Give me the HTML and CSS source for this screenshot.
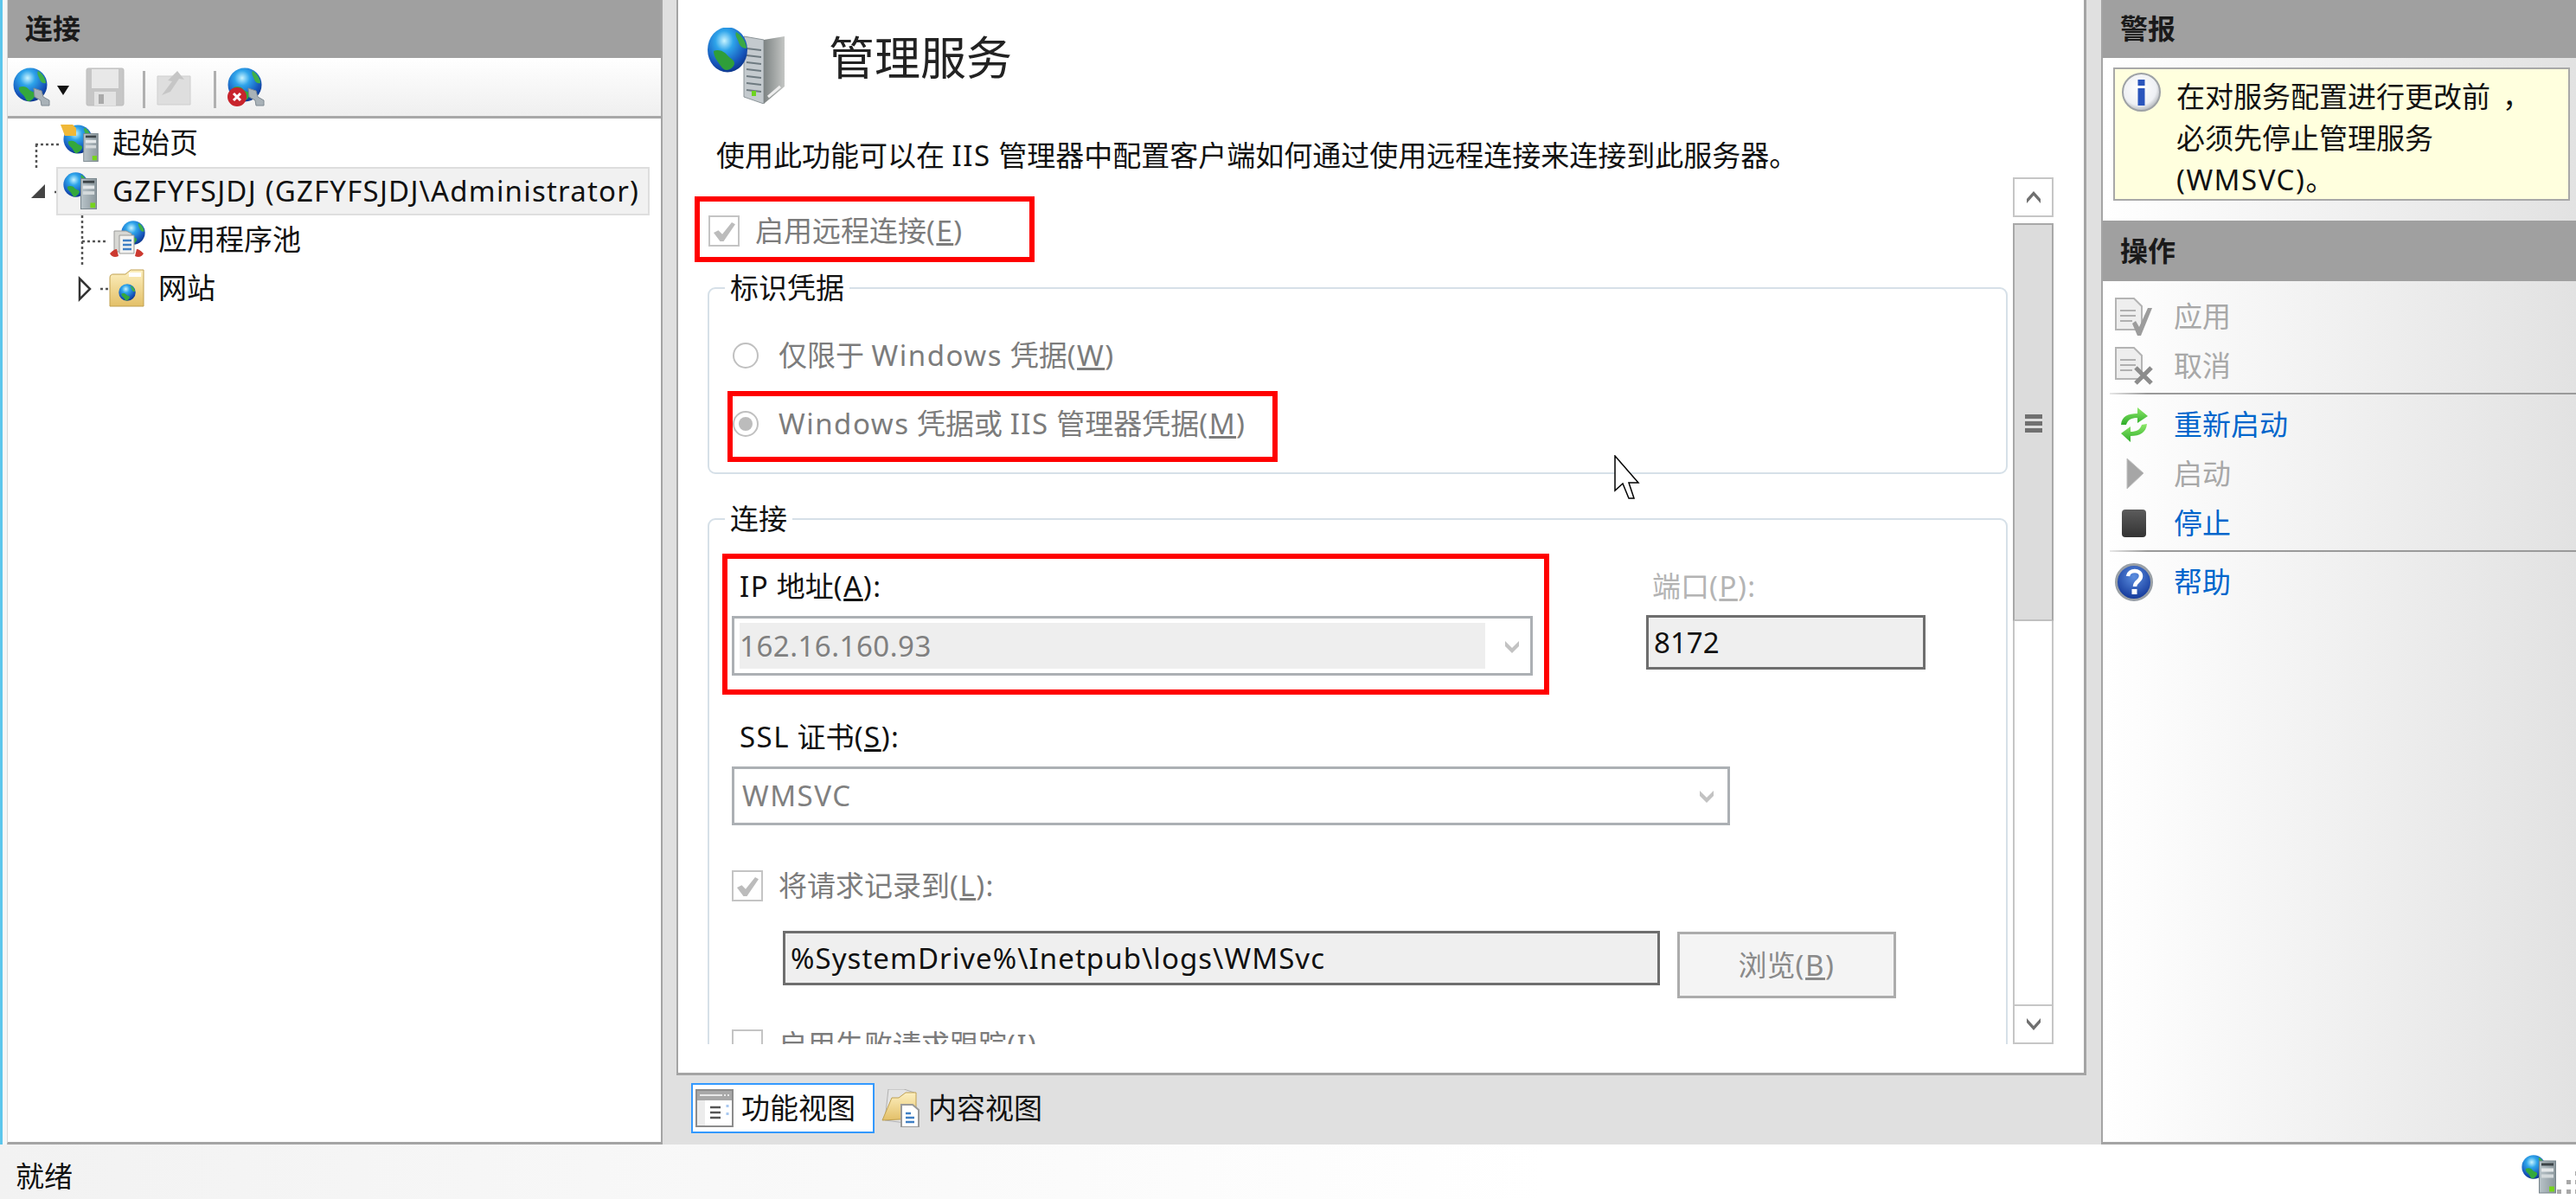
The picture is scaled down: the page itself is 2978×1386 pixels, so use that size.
FILE: index.html
```html
<!DOCTYPE html>
<html lang="zh-CN">
<head>
  <meta charset="UTF-8" />
  <title>管理服务</title>
  <link rel="stylesheet" href="styles.css">
</head>
<body>

  <!-- shared icon parts -->
  <svg class="icon-defs" xmlns="http://www.w3.org/2000/svg">
    <defs>
      <radialGradient id="gGlobe" cx="0.42" cy="0.3" r="0.75">
        <stop offset="0" stop-color="#c8f4ff"/>
        <stop offset="0.3" stop-color="#2ea4ea"/>
        <stop offset="0.75" stop-color="#1552b8"/>
        <stop offset="1" stop-color="#0b2f80"/>
      </radialGradient>
      <linearGradient id="gServer" x1="0" x2="1" y1="0" y2="0">
        <stop offset="0" stop-color="#b9c4c9"/>
        <stop offset="1" stop-color="#8b979d"/>
      </linearGradient>
      <linearGradient id="gSide" x1="0" x2="1" y1="0" y2="0">
        <stop offset="0" stop-color="#7e8484"/>
        <stop offset="1" stop-color="#c4c6c4"/>
      </linearGradient>
      <linearGradient id="gFolder" x1="0" x2="0" y1="0" y2="1">
        <stop offset="0" stop-color="#fdf0c0"/>
        <stop offset="1" stop-color="#e3c068"/>
      </linearGradient>
      <linearGradient id="gArrow" x1="0" x2="0" y1="0" y2="1">
        <stop offset="0" stop-color="#8ee86a"/>
        <stop offset="1" stop-color="#2fae2a"/>
      </linearGradient>
      <linearGradient id="gStop" x1="0" x2="0" y1="0" y2="1">
        <stop offset="0" stop-color="#5c5c5c"/>
        <stop offset="1" stop-color="#333"/>
      </linearGradient>
      <radialGradient id="gHelp" cx="0.5" cy="0.35" r="0.7">
        <stop offset="0" stop-color="#5b8ee0"/>
        <stop offset="1" stop-color="#0c2f92"/>
      </radialGradient>
      <radialGradient id="gInfo" cx="0.45" cy="0.4" r="0.6">
        <stop offset="0" stop-color="#fff"/>
        <stop offset="0.75" stop-color="#eef0f4"/>
        <stop offset="1" stop-color="#b4b8bc"/>
      </radialGradient>
    </defs>
    <symbol id="globe" viewBox="0 0 40 40">
      <circle cx="20" cy="20" r="19.5" fill="url(#gGlobe)"/>
      <path d="M7 23c4-2 9-1 11 2s8 3 8 6-5 8-8 8-4-5-6-7-6-5-5-9z" fill="#34a83c"/>
      <path d="M29 4c5 3 9 9 9 14-3 1-6-1-7-4s-4-7-2-10z" fill="#3fb048"/>
    </symbol>
    <symbol id="server" viewBox="0 0 20 38">
      <rect x="0.5" y="0.5" width="19" height="37" fill="url(#gServer)" stroke="#76838a"/>
      <rect x="3" y="3" width="14" height="3" fill="#3c4448"/>
      <rect x="3" y="9" width="14" height="4" fill="#e4e8ea"/>
      <rect x="3" y="16" width="14" height="4" fill="#d4dadc"/>
      <rect x="12" y="30" width="6" height="6" fill="#76d41c"/>
    </symbol>
    <symbol id="site-server" viewBox="0 0 44 44">
      <use href="#globe" x="3" y="0" width="29" height="29"/>
      <use href="#server" x="23" y="6" width="19" height="38"/>
    </symbol>
    <symbol id="connect-globe" viewBox="0 0 46 46">
      <use href="#globe" x="0" y="0" width="40" height="40"/>
      <path d="M24 24l9 3 2 7 7 4v6h-9l-1-6-7-4z" fill="#a9b2b8" stroke="#7f8a92" stroke-width="1"/>
    </symbol>
  </svg>

  <div class="window">
    <div class="main">

      <aside class="left-pane">
        <div class="pane-title">连接</div>
        <div class="toolbar">
          <svg class="tool-globe"><use href="#connect-globe"/></svg>
          <svg class="tool-drop" viewBox="0 0 14 12"><path d="M0 1h14L7 12z" fill="#111"/></svg>
          <svg class="tool-save" viewBox="0 0 45 45">
            <rect x="1" y="1" width="43" height="43" rx="2" fill="#c6c6c6" stroke="#bdbdbd"/>
            <rect x="7" y="2" width="31" height="22" fill="#e8e8e8"/>
            <rect x="10" y="28" width="25" height="16" fill="#e2e2e2"/>
            <rect x="15" y="31" width="6" height="11" fill="#aaa"/>
          </svg>
          <span class="tool-sep"></span>
          <svg class="tool-up" viewBox="0 0 40 42">
            <path d="M1 8h28l10 0v33H1z" fill="#dedede" stroke="#cfcfcf"/>
            <path d="M6 30l12-16-5-1 11-11 8 10-6-1-10 15z" fill="#c6c6c6"/>
          </svg>
          <span class="tool-sep"></span>
          <svg class="tool-globe-x" viewBox="0 0 46 46">
            <use href="#connect-globe"/>
            <circle cx="11" cy="34" r="11" fill="#c8242c"/>
            <path d="M7 30l8 8M15 30l-8 8" stroke="#fff" stroke-width="3"/>
          </svg>
        </div>
        <div class="tree">
          <svg class="tree-lines" viewBox="0 0 200 240">
            <path d="M32 30h29M33 30v28" class="dots"/>
            <path d="M54 85h8M86 112v58M86 142h30M107 197h10" class="dots"/>
            <path d="M27 92L43 76v16z" fill="#444"/>
            <path d="M83 185l12 12-12 12z" fill="#fff" stroke="#333" stroke-width="2.5"/>
          </svg>
          <div class="tree-row">
            <svg class="tree-icon" viewBox="0 0 44 44">
              <use href="#globe" x="3" y="1" width="34" height="34"/>
              <path d="M0 1h14l4 4v9H5z" fill="#f0b838"/>
              <use href="#server" x="26" y="11" width="18" height="33"/>
            </svg>
            起始页
          </div>
          <div class="tree-row selected">
            <svg class="tree-icon"><use href="#site-server"/></svg>
            <span class="en host">GZFYFSJDJ (GZFYFSJDJ\Administrator)</span>
          </div>
          <div class="tree-row child">
            <svg class="tree-icon" viewBox="0 0 44 44">
              <use href="#globe" x="15" y="0" width="28" height="28"/>
              <path d="M7 12h14l6 3v21H7z" fill="#d8d8d4" stroke="#9a9a98"/>
              <path d="M13 17h17v21H13z" fill="#f2f2f0" stroke="#9a9a98"/>
              <path d="M17 23h10M17 28h10M17 33h10" stroke="#3f7fc4" stroke-width="2.5"/>
              <path d="M2 38c4-4 6-5 8-5l2 8c-4 2-8 1-10-3zM41 38c-4-4-6-5-8-5l-2 8c4 2 8 1 10-3z" fill="#cc3a30"/>
            </svg>
            应用程序池
          </div>
          <div class="tree-row child">
            <svg class="tree-icon" viewBox="0 0 44 44">
              <path d="M2 10c0-3 2-4 4-4h14l6-5h15v42H2z" fill="url(#gFolder)" stroke="#c0a050"/>
              <rect x="24" y="4" width="14" height="5" fill="#fff"/>
              <use href="#globe" x="12" y="17" width="20" height="20"/>
            </svg>
            网站
          </div>
        </div>
      </aside>

      <div class="center-col">
        <section class="center-panel">
          <header class="page-head">
            <svg class="page-icon" viewBox="0 0 89 88">
              <path d="M42 10l23 4v74L42 80z" fill="#c4cace" stroke="#8c9498"/>
              <path d="M65 14l24-4v58L65 88z" fill="url(#gSide)"/>
              <path d="M45 24l17 2M45 32l17 2M45 40l17 2M45 48l17 2M45 56l17 2M45 64l17 2M45 72l17 2" stroke="#6e7a80" stroke-width="2"/>
              <rect x="51" y="73" width="5" height="6" fill="#6ed420"/>
              <path d="M70 80l14-12" stroke="#eee" stroke-width="3"/>
              <ellipse cx="23" cy="25.500" rx="23" ry="26" fill="url(#gGlobe)"/>
              <path d="M7 27c6-3 13 1 16 5s8 5 8 9-5 8-9 8-7-5-9-8-6-8-6-14z" fill="#2f9e3a"/>
              <path d="M33 5c7 4 12 12 12 19-5 0-8-3-9-7s-5-8-3-12z" fill="#3aa844"/>
            </svg>
            <h1 class="page-title">管理服务</h1>
          </header>
          <p class="page-desc">使用此功能可以在 <span class="en">IIS</span> 管理器中配置客户端如何通过使用远程连接来连接到此服务器。</p>

          <div class="scroll-area">
            <div class="scroll-content">
              <label class="check-row first dim">
                <span class="check on"></span>
                <span>启用远程连接<span class="en">(<u>E</u>)</span></span>
              </label>

              <fieldset class="group auth-group">
                <legend>标识凭据</legend>
                <div class="radio-row dim"><span class="radio"></span><span>仅限于 <span class="en">Windows</span> 凭据<span class="en">(<u>W</u>)</span></span></div>
                <div class="radio-row dim second"><span class="radio on"></span><span><span class="en">Windows</span> 凭据或 <span class="en">IIS</span> 管理器凭据<span class="en">(<u>M</u>)</span></span></div>
              </fieldset>

              <fieldset class="group conn-group">
                <legend>连接</legend>
                <div class="addr-row">
                  <div class="addr-col">
                    <div class="field-label"><span class="en">IP</span> 地址<span class="en">(<u>A</u>):</span></div>
                    <div class="combo ip-combo">
                      <span class="combo-fill">162.16.160.93</span>
                      <svg class="chevron" viewBox="0 0 20 18"><path d="M2 3l8 8 8-8v6l-8 8-8-8z" fill="#c2c2c2"/></svg>
                    </div>
                  </div>
                  <div class="port-col">
                    <div class="field-label faint">端口<span class="en">(<u>P</u>):</span></div>
                    <div class="readonly port-input">8172</div>
                  </div>
                </div>
                <div class="field-label ssl-label"><span class="en">SSL</span> 证书<span class="en">(<u>S</u>):</span></div>
                <div class="combo ssl-combo">
                  <span class="en">WMSVC</span>
                  <svg class="chevron" viewBox="0 0 20 18"><path d="M2 3l8 8 8-8v6l-8 8-8-8z" fill="#c2c2c2"/></svg>
                </div>
                <label class="check-row dim log-check">
                  <span class="check on"></span>
                  <span>将请求记录到<span class="en">(<u>L</u>):</span></span>
                </label>
                <div class="path-row">
                  <div class="readonly path-input">%SystemDrive%\Inetpub\logs\WMSvc</div>
                  <button class="browse-btn">浏览<span class="en">(<u>B</u>)</span></button>
                </div>
                <label class="check-row dim trace-check">
                  <span class="check"></span>
                  <span>启用失败请求跟踪<span class="en">(<u>I</u>)</span></span>
                </label>
              </fieldset>
            </div>

            <div class="scrollbar">
              <div class="scroll-btn">
                <svg viewBox="0 0 20 16"><path d="M2 15V10l8-9 8 9v5l-8-9z" fill="#707070"/></svg>
              </div>
              <div class="scroll-thumb">
                <span></span><span></span><span></span>
              </div>
              <div class="scroll-track"></div>
              <div class="scroll-btn">
                <svg viewBox="0 0 20 16"><path d="M2 1v5l8 9 8-9V1l-8 9z" fill="#707070"/></svg>
              </div>
            </div>
          </div>
        </section>

        <div class="view-tabs">
          <div class="view-tab active">
            <svg class="tab-icon" viewBox="0 0 44 44">
              <rect x="1" y="1" width="42" height="42" fill="#fff" stroke="#8c8c8c" stroke-width="2"/>
              <rect x="2" y="2" width="40" height="11" fill="#a8a8a8"/>
              <path d="M5 7h26M33 7h2M37 7h2" stroke="#e8e8e8" stroke-width="2"/>
              <rect x="2" y="13" width="9" height="29" fill="#ececec"/>
              <path d="M17 21h12M17 27h12M17 33h12" stroke="#555" stroke-width="2.500"/>
              <path d="M37 18v3M37 27v3" stroke="#a8c8f0" stroke-width="3"/>
            </svg>
            <span>功能视图</span>
          </div>
          <div class="view-tab">
            <svg class="tab-icon" viewBox="0 0 44 44">
              <path d="M4 36L8 0h18l12 4 2 24-4 12z" fill="#e4e4e4" stroke="#b0b0b0"/>
              <path d="M1 36L12 10h8l8-6h12v30z" fill="url(#gFolder)" stroke="#c0a050"/>
              <path d="M23 18h13l7 6v20H23z" fill="#fff" stroke="#9a9a9a" stroke-width="2"/>
              <path d="M28 28h6M28 33h10M28 38h10" stroke="#3f7fc4" stroke-width="2.500"/>
            </svg>
            <span>内容视图</span>
          </div>
        </div>
      </div>

      <aside class="right-pane">
        <div class="pane-title">警报</div>
        <div class="alert-area">
          <div class="alert-box">
            <svg class="alert-icon" viewBox="0 0 45 45">
              <circle cx="22.500" cy="22.500" r="21.500" fill="url(#gInfo)" stroke="#9ea2a6" stroke-width="2"/>
              <rect x="18.500" y="18" width="8" height="20" fill="#2a55bc"/>
              <rect x="18.500" y="8" width="8" height="7" fill="#2a55bc"/>
            </svg>
            <div class="alert-text">在对服务配置进行更改前<span class="comma">，</span><br>必须先停止管理服务<br><span class="en">(WMSVC)</span>。</div>
          </div>
        </div>
        <div class="pane-title actions-title">操作</div>
        <div class="actions">
          <div class="action off">
            <svg class="action-icon" viewBox="0 0 44 44">
              <path d="M1 1h21l9 9v27H1z" fill="#eee" stroke="#b4b4b4" stroke-width="2"/>
              <path d="M6 15h18M6 21h18M6 27h14" stroke="#b0b0b0" stroke-width="2"/>
              <path d="M20 30l4-3 4 7 10-22h5L30 44h-4z" fill="#9c9c9c"/>
            </svg>
            <span>应用</span>
          </div>
          <div class="action off">
            <svg class="action-icon" viewBox="0 0 44 44">
              <path d="M1 1h21l9 9v27H1z" fill="#eee" stroke="#b4b4b4" stroke-width="2"/>
              <path d="M6 15h18M6 21h18M6 27h14" stroke="#b0b0b0" stroke-width="2"/>
              <path d="M24 24l18 18M42 24L24 42" stroke="#8c8c8c" stroke-width="5"/>
            </svg>
            <span>取消</span>
          </div>
          <div class="action-sep"></div>
          <div class="action link">
            <svg class="action-icon" viewBox="0 0 44 44">
              <path d="M7 22C8 12 15 9 26 9V2l12 10-12 8v-6c-7 0-11 2-13 8z" fill="url(#gArrow)"/>
              <path d="M37 21c-1 10-8 14-19 14v7L7 32l11-8v6c7 0 11-2 13-8z" fill="url(#gArrow)"/>
            </svg>
            <span>重新启动</span>
          </div>
          <div class="action off">
            <svg class="action-icon" viewBox="0 0 44 44"><path d="M14 4l19 17-19 18z" fill="#a6a6a6" stroke="#c0c0c0"/></svg>
            <span>启动</span>
          </div>
          <div class="action link">
            <svg class="action-icon" viewBox="0 0 44 44"><rect x="8" y="6" width="28" height="32" rx="4" fill="url(#gStop)"/></svg>
            <span>停止</span>
          </div>
          <div class="action-sep"></div>
          <div class="action link">
            <svg class="action-icon" viewBox="0 0 44 44">
              <circle cx="22" cy="22" r="20.500" fill="url(#gHelp)" stroke="#9aa0a6" stroke-width="3"/>
              <path d="M15 15c1-8 15-8 15 0 0 6-7 6-7 12" fill="none" stroke="#fff" stroke-width="4.500"/>
              <rect x="19.500" y="30" width="6" height="6" fill="#fff"/>
            </svg>
            <span>帮助</span>
          </div>
        </div>
      </aside>
    </div>

    <footer class="status-bar">
      <span>就绪</span>
      <svg class="status-icon" viewBox="0 0 63 45">
        <use href="#globe" x="0" y="0" width="28" height="28"/>
        <use href="#server" x="20" y="6" width="20" height="39"/>
        <rect x="41" y="40" width="5" height="5" fill="#a8a8a8"/>
        <rect x="52" y="40" width="5" height="5" fill="#a8a8a8"/>
        <rect x="52" y="29" width="5" height="5" fill="#a8a8a8"/>
        <rect x="62" y="40" width="5" height="5" fill="#a8a8a8"/>
        <rect x="62" y="29" width="5" height="5" fill="#a8a8a8"/>
        <rect x="62" y="19" width="5" height="5" fill="#a8a8a8"/>
      </svg>
    </footer>

    <!-- red annotation boxes drawn over the shot -->
    <div class="mark mark-enable"></div>
    <div class="mark mark-cred"></div>
    <div class="mark mark-ip"></div>
    <svg class="mouse-cursor" viewBox="0 0 30 51">
      <path d="M1 1v40l9-8 7 17h6l-6-18h11z" fill="#fff" stroke="#000" stroke-width="1.500"/>
    </svg>
  </div>

</body>
</html>
```

FILE: styles.css
```css
* {
  box-sizing: border-box;
}

body {
  margin: 0;
  font-family: "Noto Sans", "Noto Sans CJK SC", sans-serif;
  font-size: 33px;
  line-height: 40px;
  color: #111;
  background: #e0e0e0;
}

svg {
  display: block;
  flex: none;
}

.icon-defs {
  position: absolute;
  width: 0;
  height: 0;
}

/* latin runs sit wider in the original than this font gives */
.en {
  letter-spacing: 1.5px;
}

.en.host {
  letter-spacing: 1.2px;
}

.window {
  position: relative;
  width: 2978px;
  height: 1386px;
  overflow: hidden;
  display: flex;
  flex-direction: column;
}

.main {
  height: 1323px;
  display: flex;
  border-left: 3px solid #5cc6ec;
}

/* side panes */
.left-pane {
  width: 758px;
  margin-left: 5px;
  display: flex;
  flex-direction: column;
  background: #fff;
  border-right: 2px solid #a4a4a4;
  border-left: 1px solid #d8d8d8;
  border-bottom: 3px solid #a4a4a4;
  box-shadow: -5px 0 0 #f6f6f6;
}

.pane-title {
  height: 67px;
  padding: 13px 0 0 20px;
  background: #a0a0a0;
  font-weight: 700;
  font-size: 32px;
  color: #1a1a1a;
}

.toolbar {
  height: 70px;
  padding: 11px 0 0 6px;
  display: flex;
  align-items: flex-start;
  background: linear-gradient(#fff, #efefef);
  border-bottom: 3px solid #a8a8a8;
}

.tool-globe {
  width: 46px;
  height: 46px;
}

.tool-drop {
  width: 14px;
  height: 12px;
  margin: 20px 0 0 5px;
}

.tool-save {
  width: 45px;
  height: 45px;
  margin-left: 19px;
}

.tool-sep {
  width: 3px;
  height: 43px;
  margin: 4px 0 0 21px;
  background: #b0b0b0;
}

.tool-up {
  width: 40px;
  height: 42px;
  margin: 2px 0 0 13px;
}

.tool-up + .tool-sep {
  margin-left: 26px;
}

.tool-globe-x {
  width: 46px;
  height: 46px;
  margin-left: 13px;
}

.tree {
  position: relative;
  flex: 1;
}

.tree-lines {
  position: absolute;
  left: 0;
  top: 0;
  width: 200px;
  height: 240px;
}

.dots {
  fill: none;
  stroke: #555;
  stroke-width: 2.500;
  stroke-dasharray: 3 3;
}

.tree-row {
  position: relative;
  height: 56px;
  margin-left: 56px;
  padding-left: 5px;
  display: flex;
  align-items: center;
  white-space: nowrap;
}

.tree-row.selected {
  width: 686px;
  background: #f1f1f1;
  box-shadow: inset 0 0 0 2px #dedede;
}

.tree-row.child {
  padding-left: 60px;
}

.tree-icon {
  width: 44px;
  height: 44px;
  margin-right: 16px;
}

.tree-row.child .tree-icon {
  margin-right: 14px;
}

.center-col {
  width: 1630px;
  margin-left: 16px;
  display: flex;
  flex-direction: column;
}

.center-panel {
  height: 1243px;
  background: #fff;
  border-left: 2px solid #a4a4a4;
  border-right: 3px solid #a4a4a4;
  border-bottom: 3px solid #a4a4a4;
}

.page-head {
  height: 120px;
  padding: 32px 0 0 34px;
  display: flex;
}

.page-icon {
  width: 89px;
  height: 88px;
}

.page-title {
  margin: 0 0 0 51px;
  font-size: 53px;
  line-height: 70px;
  font-weight: 400;
  color: #222;
}

.page-desc {
  margin: 43px 0 8px 44px;
  line-height: 34px;
  white-space: nowrap;
}

/* scrolled settings */
.scroll-area {
  height: 1002px;
  margin-left: 34px;
  display: flex;
}

.scroll-content {
  width: 1509px;
  overflow: hidden;
}

.dim {
  color: #7c7c7c;
}

.check-row {
  height: 40px;
  display: flex;
  align-items: center;
  gap: 18px;
  white-space: nowrap;
}

.check-row.first {
  margin: 42px 0 0 1px;
}

.check {
  width: 36px;
  height: 36px;
  border: 2px solid #c4c4c4;
  position: relative;
  flex: none;
}

.check.on::after {
  content: "";
  position: absolute;
  left: 4px;
  top: 6px;
  width: 25px;
  height: 22px;
  background: #bcbcbc;
  clip-path: polygon(0 55%, 22% 42%, 40% 62%, 84% 0, 100% 10%, 46% 100%, 30% 100%);
}

.group {
  margin: 26px 6px 0 0;
  padding: 38px 0 36px 0;
  min-width: 0;
  border: 2px solid #d6e0e8;
  border-radius: 9px;
}

.group legend {
  margin-left: 18px;
  padding: 0 6px;
  line-height: 40px;
}

.conn-group {
  margin-top: 32px;
  padding-left: 26px;
}

.conn-group legend {
  margin-left: -8px;
}

.radio-row {
  height: 40px;
  margin-left: 27px;
  display: flex;
  align-items: center;
  gap: 23px;
  white-space: nowrap;
}

.radio-row.second {
  margin-top: 39px;
}

.radio {
  width: 30px;
  height: 30px;
  border-radius: 50%;
  border: 2px solid #c0c0c0;
  background: #fff;
  display: flex;
  align-items: center;
  justify-content: center;
  flex: none;
}

.radio.on::after {
  content: "";
  width: 16px;
  height: 16px;
  border-radius: 50%;
  background: #bcbcbc;
}

.addr-row {
  display: flex;
  gap: 131px;
}

.addr-col {
  width: 926px;
}

.field-label {
  padding-left: 9px;
  margin-bottom: 14px;
  line-height: 40px;
  white-space: nowrap;
}

.field-label.faint {
  padding-left: 7px;
  margin-bottom: 13px;
  color: #b4b4b4;
}

.combo {
  display: flex;
  align-items: center;
  border: 3px solid #acb0b4;
  color: #808080;
  background: #fff;
}

.ip-combo {
  height: 69px;
  padding: 0 11px 0 6px;
}

.combo-fill {
  width: 862px;
  height: 53px;
  line-height: 53px;
  letter-spacing: 0.5px;
  background: #eee;
}

.chevron {
  width: 20px;
  height: 18px;
  margin-left: auto;
}

.ssl-label {
  margin-top: 51px;
}

.ssl-combo {
  width: 1154px;
  height: 68px;
  padding: 0 14px 0 9px;
}

.readonly {
  background: #efefef;
  border: 3px solid #6e6e6e;
  color: #111;
}

.port-input {
  width: 323px;
  height: 63px;
  padding-left: 6px;
  line-height: 57px;
}

.log-check {
  margin-top: 50px;
}

.path-row {
  margin: 32px 0 0 59px;
  display: flex;
  align-items: flex-start;
  gap: 20px;
}

.path-input {
  width: 1014px;
  height: 63px;
  padding-left: 6px;
  line-height: 57px;
  letter-spacing: 1.05px;
  white-space: nowrap;
}

.browse-btn {
  width: 253px;
  height: 77px;
  margin-top: 1px;
  background: #f4f4f4;
  border: 3px solid #acacac;
  color: #8a8a8a;
  font: inherit;
}

.trace-check {
  margin-top: 34px;
}

.scrollbar {
  width: 47px;
  display: flex;
  flex-direction: column;
}

.scroll-btn {
  height: 46px;
  border: 2px solid #c6c6c6;
  background: #fff;
  display: flex;
  align-items: center;
  justify-content: center;
}

.scroll-btn svg {
  width: 20px;
  height: 16px;
}

.scroll-thumb {
  height: 460px;
  margin-top: 7px;
  padding-top: 219px;
  background: #dcdcdc;
  border: 2px solid #a8a8a8;
  border-bottom-color: #c0c0c0;
  display: flex;
  flex-direction: column;
  align-items: center;
  gap: 3px;
}

.scroll-thumb span {
  width: 20px;
  height: 5px;
  background: #707070;
}

.scroll-track {
  flex: 1;
  background: #fff;
  border-left: 2px solid #c6c6c6;
  border-right: 2px solid #c6c6c6;
}

/* bottom tabs */
.view-tabs {
  padding: 9px 0 0 17px;
  display: flex;
  gap: 8px;
}

.view-tab {
  height: 58px;
  display: flex;
  align-items: center;
  gap: 10px;
}

.view-tab.active {
  width: 212px;
  padding-left: 3px;
  gap: 9px;
  background: #fff;
  border: 2px solid #3399ff;
}

.tab-icon {
  width: 44px;
  height: 44px;
}

/* right pane */
.right-pane {
  flex: 1;
  margin-left: 17px;
  display: flex;
  flex-direction: column;
  border-left: 2px solid #a4a4a4;
  border-bottom: 3px solid #a4a4a4;
  background: linear-gradient(90deg, #fff, #e2e2e2);
}

.alert-area {
  height: 188px;
  padding: 11px 7px 0 12px;
}

.alert-box {
  height: 154px;
  padding: 8px 0 0 8px;
  display: flex;
  gap: 18px;
  background: #ffffde;
  border: 2px solid #a8a8a8;
  line-height: 48px;
}

.alert-icon {
  width: 45px;
  height: 45px;
  margin-top: -4px;
}

.alert-text {
  white-space: nowrap;
}

.comma {
  margin-left: 14px;
}

.actions-title {
  height: 70px;
  padding-top: 15px;
}

.actions {
  padding-top: 12px;
}

.action {
  height: 57px;
  padding-left: 14px;
  display: flex;
  align-items: center;
  gap: 24px;
}

.action-icon {
  width: 44px;
  height: 44px;
}

.action.off {
  color: #a8a8a8;
}

.action.link {
  color: #0066cc;
}

.action-sep {
  height: 2px;
  margin: 3px 0 6px 8px;
  background: linear-gradient(90deg, #e8e8e8, #9a9a9a 8%);
}

/* status bar */
.status-bar {
  flex: 1;
  padding: 12px 0 6px 18px;
  display: flex;
  justify-content: space-between;
  background: linear-gradient(90deg, #f2f2f2, #fff 60%);
}

.status-bar > span {
  margin-top: 5px;
}

.status-icon {
  width: 63px;
  height: 45px;
  overflow: visible;
}

/* annotations */
.mark {
  position: absolute;
  border: 6px solid #ff0000;
}

.mark-enable {
  left: 803px;
  top: 227px;
  width: 393px;
  height: 76px;
}

.mark-cred {
  left: 841px;
  top: 452px;
  width: 636px;
  height: 82px;
}

.mark-ip {
  left: 835px;
  top: 640px;
  width: 956px;
  height: 163px;
}

.mouse-cursor {
  position: absolute;
  left: 1866px;
  top: 526px;
  width: 30px;
  height: 51px;
}
```
